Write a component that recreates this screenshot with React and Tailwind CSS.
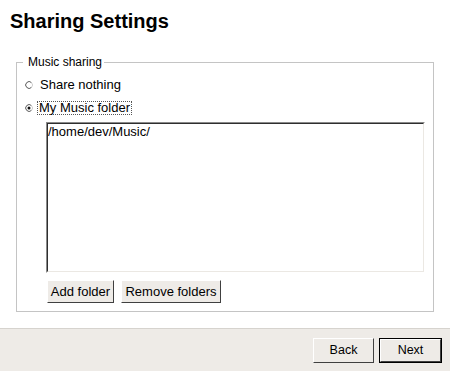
import React from "react";

function Radio({ checked }) {
  return (
    <svg width="8" height="8" viewBox="0 0 8 8" className="shrink-0">
      <path d="M6.5 1.6 A3.4 3.4 0 1 0 6.5 6.4" fill="none" stroke="#5a5a5a" strokeWidth="1" />
      <path d="M6.5 1.6 A3.4 3.4 0 0 1 6.5 6.4" fill="none" stroke="#d0d0d0" strokeWidth="1" />
      {checked && <circle cx="4" cy="4" r="1.5" fill="#111" />}
    </svg>
  );
}

function Btn({ children, className = "" }) {
  return (
    <div
      className={
        "flex items-center justify-center bg-[#eeebe7] border border-t-white border-l-white border-r-[#404040] border-b-[#404040] leading-[15px] text-black whitespace-nowrap " +
        className
      }
    >
      {children}
    </div>
  );
}

export default function App() {
  return (
    <div
      className="w-[450px] h-[371px] bg-white flex flex-col text-black overflow-hidden"
      style={{ fontFamily: '"Liberation Sans", Arial, sans-serif' }}
    >
      <div className="pl-[10px] pt-[10px] h-[33px] text-[20px] leading-[23px] font-bold">
        Sharing Settings
      </div>
      <fieldset className="ml-[16px] mt-[23px] w-[418px] border border-[#c4c4c4]">
        <legend className="ml-[6px] pl-[5px] pr-[2px] text-[12px] leading-[13px]">
          Music sharing
        </legend>
        <div className="pl-[8px] pb-[8px]">
          <div className="mt-[4px] h-[23px] flex items-center">
            <Radio checked={false} />
            <span className="ml-[7px] text-[13px] leading-[15px]">Share nothing</span>
          </div>
          <div className="h-[23px] flex items-center">
            <Radio checked />
            <span className="ml-[4px] border border-dotted border-[#555] pl-[1px] pr-[1px] text-[13px] leading-[12px]">
              My Music folder
            </span>
          </div>
          <div className="ml-[21px] mt-[3px] w-[379px] h-[151px] border border-t-[#8a8a8a] border-l-[#8a8a8a] border-r-white border-b-white">
            <div className="w-full h-full border border-t-[#2e2e2e] border-l-[#2e2e2e] border-r-[#ebe8e3] border-b-[#ebe8e3] pl-[0px] pt-[0px] text-[13px] leading-[15px]">
              /home/dev/Music/
            </div>
          </div>
          <div className="ml-[22px] mt-[7px] flex gap-[7px]">
            <Btn className="w-[67px] h-[23px] text-[13px]">Add folder</Btn>
            <Btn className="w-[100px] h-[23px] text-[13px]">Remove folders</Btn>
          </div>
        </div>
      </fieldset>
      <div className="mt-auto h-[43px] border-t border-[#d6d3ce] bg-[#eeebe7] flex items-start justify-end pr-[8px] pt-[9px] gap-[5px]">
        <Btn className="w-[61px] h-[25px] text-[12.5px]">Back</Btn>
        <div className="border border-black">
          <Btn className="w-[61px] h-[23px] text-[12.5px]">Next</Btn>
        </div>
      </div>
    </div>
  );
}
